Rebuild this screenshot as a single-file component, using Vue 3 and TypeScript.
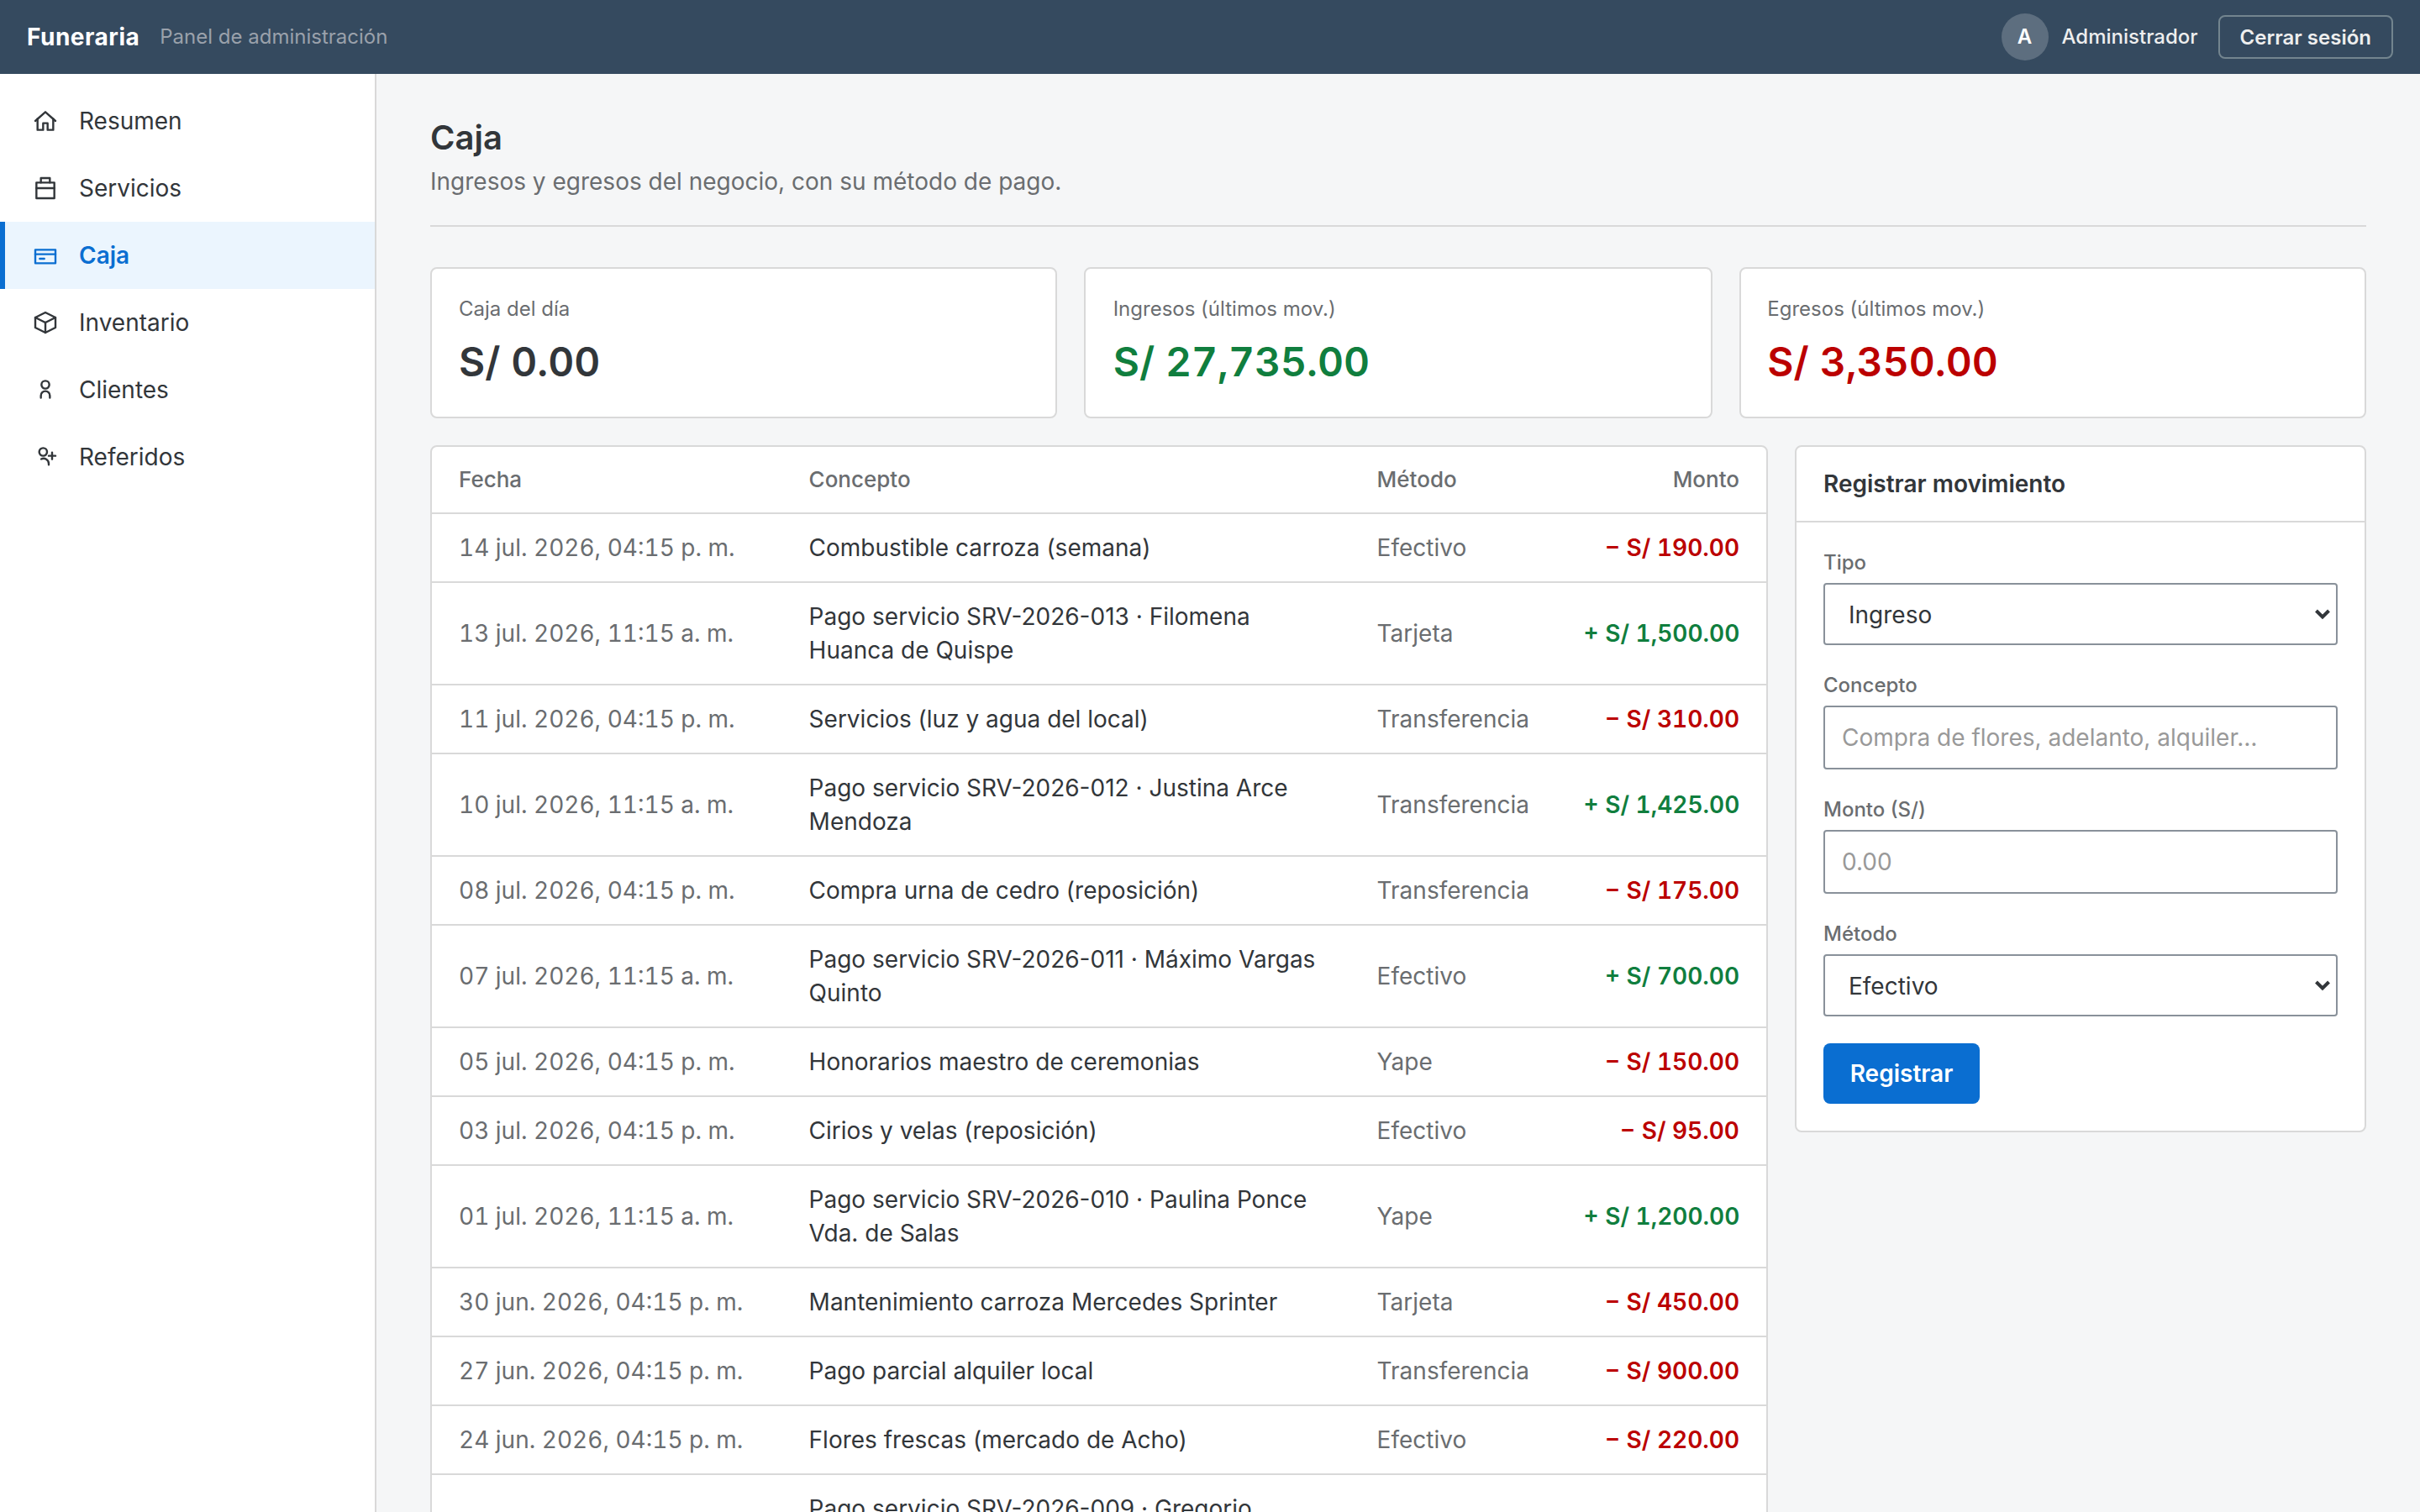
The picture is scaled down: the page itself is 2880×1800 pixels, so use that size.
<script setup lang="ts">
interface NavItem {
  label: string
  paths: string[]
  active?: boolean
}

interface Movement {
  date: string
  concept: string
  method: string
  amount: string
  income: boolean
}

const nav: NavItem[] = [
  { label: 'Resumen', paths: ['M3 12l9-8 9 8', 'M5 10v10h5v-6h4v6h5V10'] },
  { label: 'Servicios', paths: ['M4 7h16v14H4z', 'M8 7V3h8v4', 'M4 12h16'] },
  { label: 'Caja', paths: ['M3 7h18v12H3z', 'M3 11h18', 'M7 15h4'], active: true },
  { label: 'Inventario', paths: ['M12 3l9 4.5v9L12 21l-9-4.5v-9z', 'M3 7.5l9 4.5 9-4.5', 'M12 12v9'] },
  { label: 'Clientes', paths: ['M12 11a3.5 3.5 0 1 0 0-7 3.5 3.5 0 0 0 0 7z', 'M8 19.2v-2a4 4 0 0 1 8 0v2'] },
  { label: 'Referidos', paths: ['M10 11a3.5 3.5 0 1 0 0-7 3.5 3.5 0 0 0 0 7z', 'M8.3 13.9a4.600 4.600 0 0 1 6.700 4.100v1', 'M18 8v6', 'M15 11h6'] },
]

const stats = [
  { label: 'Caja del día', value: 'S/ 0.00', tone: '' },
  { label: 'Ingresos (últimos mov.)', value: 'S/ 27,735.00', tone: 'positive' },
  { label: 'Egresos (últimos mov.)', value: 'S/ 3,350.00', tone: 'negative' },
]

const movements: Movement[] = [
  { date: '14 jul. 2026, 04:15 p. m.', concept: 'Combustible carroza (semana)', method: 'Efectivo', amount: '190.00', income: false },
  { date: '13 jul. 2026, 11:15 a. m.', concept: 'Pago servicio SRV-2026-013 · Filomena Huanca de Quispe', method: 'Tarjeta', amount: '1,500.00', income: true },
  { date: '11 jul. 2026, 04:15 p. m.', concept: 'Servicios (luz y agua del local)', method: 'Transferencia', amount: '310.00', income: false },
  { date: '10 jul. 2026, 11:15 a. m.', concept: 'Pago servicio SRV-2026-012 · Justina Arce Mendoza', method: 'Transferencia', amount: '1,425.00', income: true },
  { date: '08 jul. 2026, 04:15 p. m.', concept: 'Compra urna de cedro (reposición)', method: 'Transferencia', amount: '175.00', income: false },
  { date: '07 jul. 2026, 11:15 a. m.', concept: 'Pago servicio SRV-2026-011 · Máximo Vargas Quinto', method: 'Efectivo', amount: '700.00', income: true },
  { date: '05 jul. 2026, 04:15 p. m.', concept: 'Honorarios maestro de ceremonias', method: 'Yape', amount: '150.00', income: false },
  { date: '03 jul. 2026, 04:15 p. m.', concept: 'Cirios y velas (reposición)', method: 'Efectivo', amount: '95.00', income: false },
  { date: '01 jul. 2026, 11:15 a. m.', concept: 'Pago servicio SRV-2026-010 · Paulina Ponce Vda. de Salas', method: 'Yape', amount: '1,200.00', income: true },
  { date: '30 jun. 2026, 04:15 p. m.', concept: 'Mantenimiento carroza Mercedes Sprinter', method: 'Tarjeta', amount: '450.00', income: false },
  { date: '27 jun. 2026, 04:15 p. m.', concept: 'Pago parcial alquiler local', method: 'Transferencia', amount: '900.00', income: false },
  { date: '24 jun. 2026, 04:15 p. m.', concept: 'Flores frescas (mercado de Acho)', method: 'Efectivo', amount: '220.00', income: false },
  { date: '22 jun. 2026, 11:15 a. m.', concept: 'Pago servicio SRV-2026-009 · Gregorio Mamani Flores', method: 'Efectivo', amount: '1,300.00', income: true },
]
</script>

<template>
  <div class="app">
    <header class="topbar">
      <span class="brand">Funeraria</span>
      <span class="tagline">Panel de administración</span>
      <div class="session">
        <span class="avatar">A</span>
        <span class="username">Administrador</span>
        <button class="logout" type="button">Cerrar sesión</button>
      </div>
    </header>

    <div class="body">
      <nav class="sidebar">
        <a v-for="item in nav" :key="item.label" class="nav-item" :class="{ active: item.active }">
          <svg class="nav-icon" viewBox="0 0 24 24">
            <path v-for="d in item.paths" :key="d" :d="d" />
          </svg>
          <span>{{ item.label }}</span>
        </a>
      </nav>

      <main class="main">
        <div class="page-head">
          <h1>Caja</h1>
          <p>Ingresos y egresos del negocio, con su método de pago.</p>
        </div>

        <section class="stats">
          <div v-for="s in stats" :key="s.label" class="card stat">
            <div class="stat-label">{{ s.label }}</div>
            <div class="stat-value" :class="s.tone">{{ s.value }}</div>
          </div>
        </section>

        <section class="columns">
          <div class="card">
            <table>
              <colgroup>
                <col class="c-date" />
                <col class="c-concept" />
                <col class="c-method" />
                <col />
              </colgroup>
              <thead>
                <tr>
                  <th>Fecha</th>
                  <th>Concepto</th>
                  <th>Método</th>
                  <th class="right">Monto</th>
                </tr>
              </thead>
              <tbody>
                <tr v-for="m in movements" :key="m.date">
                  <td class="muted num">{{ m.date }}</td>
                  <td>{{ m.concept }}</td>
                  <td class="muted">{{ m.method }}</td>
                  <td class="right amount num" :class="m.income ? 'positive' : 'negative'">{{ m.income ? '+' : '−' }} S/ {{ m.amount }}</td>
                </tr>
              </tbody>
            </table>
          </div>

          <div class="card">
            <h2>Registrar movimiento</h2>
            <form class="form" @submit.prevent>
              <div class="field">
                <label>Tipo</label>
                <div class="control select">
                  <span>Ingreso</span>
                  <svg class="chevron" viewBox="0 0 20 14"><path d="M2.500 3l7.500 7.500L17.500 3" /></svg>
                </div>
              </div>
              <div class="field">
                <label>Concepto</label>
                <input class="control" type="text" placeholder="Compra de flores, adelanto, alquiler…" />
              </div>
              <div class="field">
                <label>Monto (S/)</label>
                <input class="control" type="text" placeholder="0.00" />
              </div>
              <div class="field">
                <label>Método</label>
                <div class="control select">
                  <span>Efectivo</span>
                  <svg class="chevron" viewBox="0 0 20 14"><path d="M2.500 3l7.500 7.500L17.500 3" /></svg>
                </div>
              </div>
              <button class="submit" type="submit">Registrar</button>
            </form>
          </div>
        </section>
      </main>
    </div>
  </div>
</template>

<style>
body {
  margin: 0;
  overflow: hidden;
  background: #f5f6f7;
}
</style>

<style scoped>
.app,
.app * {
  box-sizing: border-box;
}
.app {
  display: flex;
  flex-direction: column;
  height: 100vh;
  overflow: hidden;
  background: #f5f6f7;
  color: #32363a;
  font-family: Inter, 'Liberation Sans', sans-serif;
  font-size: 28px;
  line-height: 40px;
}
.topbar {
  display: flex;
  flex: none;
  align-items: center;
  height: 88px;
  padding: 0 32px;
  background: #354a5f;
  color: #fff;
}
.brand {
  font-size: 28px;
  font-weight: 700;
  letter-spacing: 0.5px;
}
.tagline {
  margin-left: 24px;
  color: #9aa1ab;
  font-size: 24px;
}
.session {
  display: flex;
  align-items: center;
  margin-left: auto;
  color: #eee;
  font-size: 24px;
}
.avatar {
  display: flex;
  align-items: center;
  justify-content: center;
  width: 56px;
  height: 56px;
  border-radius: 50%;
  background: rgba(255, 255, 255, 0.2);
  color: #fff;
  font-weight: 600;
}
.username {
  margin: 0 24px 0 16px;
  font-weight: 500;
}
.logout {
  height: 52px;
  padding: 0 24px;
  border: 2px solid #73858f;
  border-radius: 8px;
  background: transparent;
  color: #eee;
  font: 600 24px Inter, 'Liberation Sans', sans-serif;
}
.body {
  display: flex;
  flex: 1;
  min-height: 0;
}
.sidebar {
  flex: none;
  width: 448px;
  padding-top: 16px;
  border-right: 2px solid #d9d9d9;
  background: #fff;
}
.nav-item {
  display: flex;
  align-items: center;
  gap: 24px;
  height: 80px;
  padding: 0 32px;
  border-left: 6px solid transparent;
}
.nav-item.active {
  border-left-color: #0a6ed1;
  background: #ebf5fe;
  color: #0a6ed1;
  font-weight: 600;
}
.nav-icon {
  width: 32px;
  height: 32px;
  fill: none;
  stroke: currentColor;
  stroke-width: 1.8;
  stroke-linecap: round;
  stroke-linejoin: round;
}
.main {
  flex: 1;
  min-width: 0;
  padding: 48px 64px 0;
}
.page-head {
  margin-bottom: 48px;
  padding-bottom: 32px;
  border-bottom: 2px solid #d9d9d9;
}
h1 {
  margin: 0 0 4px;
  font-size: 40px;
  font-weight: 600;
  line-height: 56px;
}
.page-head p {
  margin: 0;
  color: #6a6d70;
}
.card {
  border: 2px solid #d9d9d9;
  border-radius: 8px;
  background: #fff;
}
.stats {
  display: grid;
  grid-template-columns: 746px 1fr 746px;
  gap: 32px;
  margin-bottom: 32px;
}
.stat {
  height: 180px;
  padding: 32px;
}
.stat:nth-child(2) {
  padding-left: 32.67px;
}
.stat:nth-child(3) {
  padding-left: 31.33px;
}
.stat-label {
  margin-bottom: 12px;
  color: #6a6d70;
  font-size: 24px;
  line-height: 32px;
}
.stat-value {
  font-size: 48px;
  font-weight: 600;
  line-height: 70px;
  font-variant-numeric: tabular-nums;
}
.positive {
  color: #107e3e;
}
.negative {
  color: #b00;
}
.columns {
  display: grid;
  grid-template-columns: 1fr 680px;
  align-items: start;
  gap: 32px;
}
table {
  width: 100%;
  table-layout: fixed;
  border-collapse: separate;
  border-spacing: 0;
}
.c-date {
  width: 416.6px;
}
.c-concept {
  width: 676px;
}
.c-method {
  width: 246px;
}
th {
  height: 80px;
  padding: 0 32px;
  border-bottom: 2px solid #d9d9d9;
  color: #6a6d70;
  font-size: 26px;
  font-weight: 500;
  text-align: left;
}
td {
  padding: 20px 32px;
  border-bottom: 2px solid #d9d9d9;
  vertical-align: middle;
}
.muted {
  color: #6a6d70;
}
.num {
  font-variant-numeric: tabular-nums;
  white-space: nowrap;
}
.right {
  text-align: right;
}
.amount {
  font-weight: 600;
}
h2 {
  margin: 0;
  padding: 24px 32px;
  border-bottom: 2px solid #d9d9d9;
  font-size: 28px;
  font-weight: 600;
  line-height: 40px;
}
.form {
  display: flex;
  flex-direction: column;
  align-items: flex-start;
  gap: 32px;
  padding: 32px;
}
.field {
  display: flex;
  flex-direction: column;
  gap: 8px;
  width: 100%;
}
label {
  color: #6a6d70;
  font-size: 24px;
  font-weight: 500;
  line-height: 32px;
}
.control {
  width: 100%;
  height: 76px;
  padding: 0 20px;
  border: 2px solid #89919a;
  border-radius: 4px;
  background: #fff;
  color: #32363a;
  font: 28px Inter, 'Liberation Sans', sans-serif;
}
.control::placeholder {
  color: #999;
  opacity: 1;
}
.select {
  display: flex;
  align-items: center;
  justify-content: space-between;
  height: 74px;
  padding: 0 6px 0 28px;
}
.select span {
  padding-top: 2px;
}
.chevron {
  width: 20px;
  height: 14px;
  fill: none;
  stroke: #32363a;
  stroke-width: 4;
}
.submit {
  width: 186px;
  height: 72px;
  padding: 0;
  border: 0;
  border-radius: 8px;
  background: #0a6ed1;
  color: #fff;
  font: 600 28px Inter, 'Liberation Sans', sans-serif;
}
</style>
